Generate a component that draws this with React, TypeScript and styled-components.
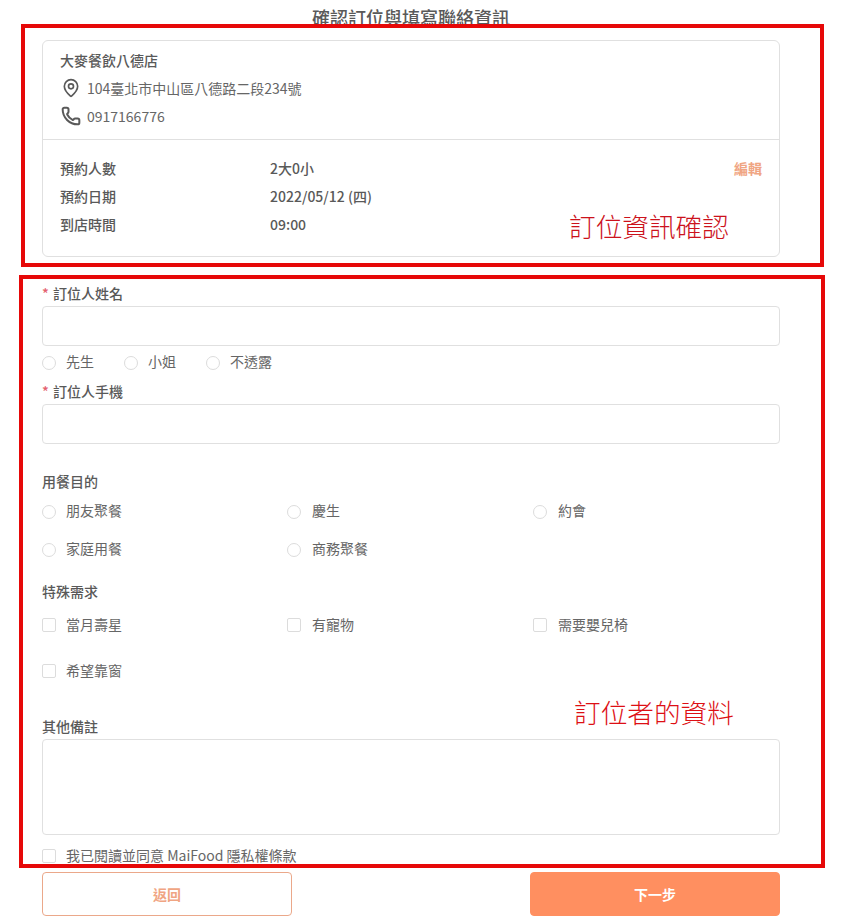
import React from 'react';
import styled, { createGlobalStyle } from 'styled-components';
import { MapPin, Phone } from 'lucide-react';

const GlobalStyle = createGlobalStyle`
  * {
    box-sizing: border-box;
  }
  body {
    margin: 0;
    background: #fff;
    font-family: "Noto Sans CJK TC", "Noto Sans", sans-serif;
    font-size: 14px;
    color: #595959;
  }
`;

const Page = styled.div`
  position: relative;
  width: 862px;
  min-height: 922px;
  padding: 0 82px 0 42px;
`;

const Title = styled.h1`
  margin: 0;
  padding: 5px 0 11px;
  font-size: 18px;
  line-height: 24px;
  font-weight: 500;
  text-align: center;
  color: #595959;
`;

const Card = styled.section`
  border: 1px solid #e0e0e0;
  border-radius: 6px;
`;

const StoreInfo = styled.div`
  padding: 6px 17px 8px;
  border-bottom: 1px solid #e0e0e0;
`;

const StoreName = styled.div`
  padding-bottom: 2px;
  line-height: 26px;
  font-weight: 500;
`;

const StoreRow = styled.div`
  display: flex;
  align-items: center;
  height: 28px;
  padding-bottom: 2px;
  color: #666;
`;

const IconSlot = styled.span`
  display: flex;
  justify-content: center;
  width: 22px;
  margin-right: 5px;
  color: #595959;
`;

const Booking = styled.div`
  padding: 15px 17px 17px;
`;

const BookingRow = styled.div`
  display: flex;
  height: 28px;
  line-height: 26px;
`;

const BookingLabel = styled.span`
  width: 210px;
  font-weight: 500;
`;

const BookingValue = styled.span`
  flex: 1;
  font-weight: 500;
`;

const EditLink = styled.a`
  font-weight: 700;
  color: #f0a583;
`;

const Label = styled.label<{ $top: number }>`
  display: block;
  margin-top: ${(p) => p.$top}px;
  padding-bottom: 2px;
  line-height: 18px;
  font-size: 14px;
  font-weight: 500;
`;

const Star = styled.span`
  display: inline-block;
  width: 11px;
  color: #e4606d;
`;

const TextInput = styled.input`
  display: block;
  width: 100%;
  height: 40px;
  margin-top: 2px;
  border: 1px solid #e0e0e0;
  border-radius: 4px;
  outline: none;
`;

const TextArea = styled.textarea`
  display: block;
  width: 100%;
  height: 96px;
  margin-top: 2px;
  border: 1px solid #e0e0e0;
  border-radius: 4px;
  outline: none;
  resize: none;
`;

const InlineOptions = styled.div`
  display: flex;
  gap: 30px;
  margin-top: 6px;
`;

const OptionGrid = styled.div<{ $top: number; $gap: number }>`
  display: grid;
  grid-template-columns: 245.4px 246px 1fr;
  row-gap: ${(p) => p.$gap}px;
  margin-top: ${(p) => p.$top}px;

  > :not(:nth-child(3n + 1)) {
    gap: 10.6px;
  }
`;

const Option = styled.label<{ $top?: number }>`
  display: flex;
  align-items: center;
  gap: 10px;
  height: 20px;
  padding-bottom: 2px;
  margin-top: ${(p) => p.$top ?? 0}px;
  line-height: 18px;
  color: #666;
`;

const Mark = styled.input`
  appearance: none;
  flex: none;
  width: 14px;
  height: 14px;
  margin: ${(p) => (p.type === 'radio' ? '4px' : '2px')} 0 0;
  border: 1px solid #dcdcdc;
  background: #fff;
  border-radius: ${(p) => (p.type === 'radio' ? '50%' : '2px')};
`;

const Actions = styled.div`
  display: flex;
  justify-content: space-between;
  margin-top: 6px;
`;

const BackButton = styled.button`
  width: 250px;
  height: 44px;
  border: 1px solid #eba88a;
  border-radius: 4px;
  background: #fff;
  color: #f0a583;
  font: 700 14px "Noto Sans CJK TC", sans-serif;
`;

const NextButton = styled(BackButton)`
  border-color: #ff8f60;
  background: #ff8f60;
  color: #fff;
`;

// the red boxes and captions drawn over the screenshot
const Annotation = styled.div<{ $left: number; $top: number; $width: number; $height: number }>`
  position: absolute;
  left: ${(p) => p.$left}px;
  top: ${(p) => p.$top}px;
  width: ${(p) => p.$width}px;
  height: ${(p) => p.$height}px;
  border: 4px solid #e60808;
  pointer-events: none;
`;

const Caption = styled.span<{ $left: number; $top: number; $color: string }>`
  position: absolute;
  left: ${(p) => p.$left}px;
  top: ${(p) => p.$top}px;
  font-size: 26.67px;
  font-weight: 300;
  line-height: 36px;
  white-space: nowrap;
  color: ${(p) => p.$color};
`;

const purposes = ['朋友聚餐', '慶生', '約會', '家庭用餐', '商務聚餐'];
const needs = ['當月壽星', '有寵物', '需要嬰兒椅', '希望靠窗'];

const App: React.FC = () => {
  return (
    <Page>
      <GlobalStyle />
      <Title>確認訂位與填寫聯絡資訊</Title>

      <Card>
        <StoreInfo>
          <StoreName>大麥餐飲八德店</StoreName>
          <StoreRow>
            <IconSlot>
              <MapPin size={20} strokeWidth={2} />
            </IconSlot>
            104臺北市中山區八德路二段234號
          </StoreRow>
          <StoreRow>
            <IconSlot>
              <Phone size={20} strokeWidth={2.4} />
            </IconSlot>
            0917166776
          </StoreRow>
        </StoreInfo>
        <Booking>
          <BookingRow>
            <BookingLabel>預約人數</BookingLabel>
            <BookingValue>2大0小</BookingValue>
            <EditLink>編輯</EditLink>
          </BookingRow>
          <BookingRow>
            <BookingLabel>預約日期</BookingLabel>
            <BookingValue>2022/05/12 (四)</BookingValue>
          </BookingRow>
          <BookingRow>
            <BookingLabel>到店時間</BookingLabel>
            <BookingValue>09:00</BookingValue>
          </BookingRow>
        </Booking>
      </Card>

      <form>
        <Label $top={27}>
          <Star>*</Star>訂位人姓名
        </Label>
        <TextInput type="text" />
        <InlineOptions>
          {['先生', '小姐', '不透露'].map((name) => (
            <Option key={name}>
              <Mark type="radio" name="title" />
              {name}
            </Option>
          ))}
        </InlineOptions>

        <Label $top={10}>
          <Star>*</Star>訂位人手機
        </Label>
        <TextInput type="text" />

        <Label $top={28}>用餐目的</Label>
        <OptionGrid $top={9} $gap={18}>
          {purposes.map((name) => (
            <Option key={name}>
              <Mark type="radio" name="purpose" />
              {name}
            </Option>
          ))}
        </OptionGrid>

        <Label $top={23}>特殊需求</Label>
        <OptionGrid $top={13} $gap={26}>
          {needs.map((name) => (
            <Option key={name}>
              <Mark type="checkbox" />
              {name}
            </Option>
          ))}
        </OptionGrid>

        <Label $top={36}>其他備註</Label>
        <TextArea />

        <Option $top={11}>
          <Mark type="checkbox" />
          我已閱讀並同意 MaiFood 隱私權條款
        </Option>

        <Actions>
          <BackButton type="button">返回</BackButton>
          <NextButton type="button">下一步</NextButton>
        </Actions>
      </form>

      <Annotation $left={21} $top={24} $width={803} $height={243}>
        <Caption $left={544} $top={180} $color="#cc121c">訂位資訊確認</Caption>
      </Annotation>
      <Annotation $left={19} $top={275} $width={806} $height={593}>
        <Caption $left={551} $top={415} $color="#dd0f14">訂位者的資料</Caption>
      </Annotation>
    </Page>
  );
};

export default App;
